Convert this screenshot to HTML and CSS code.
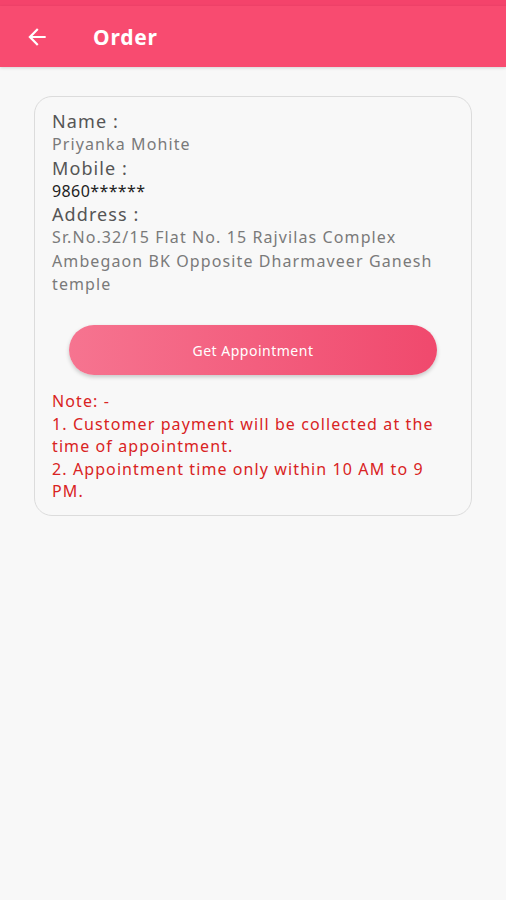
FILE: index.html
```html
<!DOCTYPE html>
<html lang="en">
<head>
    <meta charset="UTF-8">
    <meta name="viewport" content="width=device-width, initial-scale=1.0">
    <title>Order</title>
    <link rel="stylesheet" href="styles.css">
</head>
<body>

    <div class="status-bar"></div>
    <div class="toolbar">
        <svg class="back-icon" width="26" height="26" viewBox="0 0 24 24">
            <path d="M20 11H7.83l5.59-5.59L12 4l-8 8 8 8 1.41-1.41L7.83 13H20v-2z" fill="#fff"/>
        </svg>
        <h1>Order</h1>
    </div>

    <div class="card">
        <div class="label">Name :</div>
        <div class="value">Priyanka Mohite</div>
        <div class="label">Mobile :</div>
        <div class="value dark">9860******</div>
        <div class="label">Address :</div>
        <div class="value">Sr.No.32/15 Flat No. 15 Rajvilas Complex Ambegaon BK Opposite Dharmaveer Ganesh temple</div>

        <button class="appt-btn">Get Appointment</button>

        <div class="note">
            Note: -<br>
            1. Customer payment will be collected at the time of appointment.<br>
            2. Appointment time only within 10 AM to 9 PM.
        </div>
    </div>

</body>
</html>
```

FILE: styles.css
```css
body {
    margin: 0;
    font-family: "Noto Sans", sans-serif;
    background-color: #f8f8f8;
}
.status-bar {
    height: 6px;
    background: #f4436b;
}
.toolbar {
    height: 61px;
    background: #f84b70;
    display: flex;
    align-items: center;
    padding-left: 24px;
    box-shadow: 0 1px 3px rgba(0, 0, 0, 0.15);
}
.back-icon {
    display: block;
}
.toolbar h1 {
    margin: 0 0 0 43px;
    color: white;
    font-size: 21px;
    font-weight: bold;
    letter-spacing: 0.8px;
}
.card {
    margin: 29px 34px 0 34px;
    padding: 13px 17px 12px 17px;
    border: 1px solid #dcdcdc;
    border-radius: 18px;
}
.label {
    font-size: 18px;
    color: #555;
    line-height: 23.3px;
    letter-spacing: 1.1px;
}
.value {
    font-size: 16px;
    color: #7a7a7a;
    line-height: 23.3px;
    letter-spacing: 1.1px;
}
.value.dark {
    color: #222;
    letter-spacing: 0.4px;
}
.appt-btn {
    display: block;
    width: 368px;
    height: 50px;
    margin: 29px auto 0 auto;
    border: none;
    border-radius: 25px;
    background: linear-gradient(to right, #f67490, #f0496d);
    color: white;
    font-family: "Noto Sans", sans-serif;
    font-size: 14px;
    letter-spacing: 0.5px;
    box-shadow: 0 2px 4px rgba(0, 0, 0, 0.2);
    cursor: pointer;
}
.note {
    margin-top: 15px;
    font-size: 16px;
    line-height: 22.5px;
    color: #d92323;
    letter-spacing: 1.1px;
}
```
